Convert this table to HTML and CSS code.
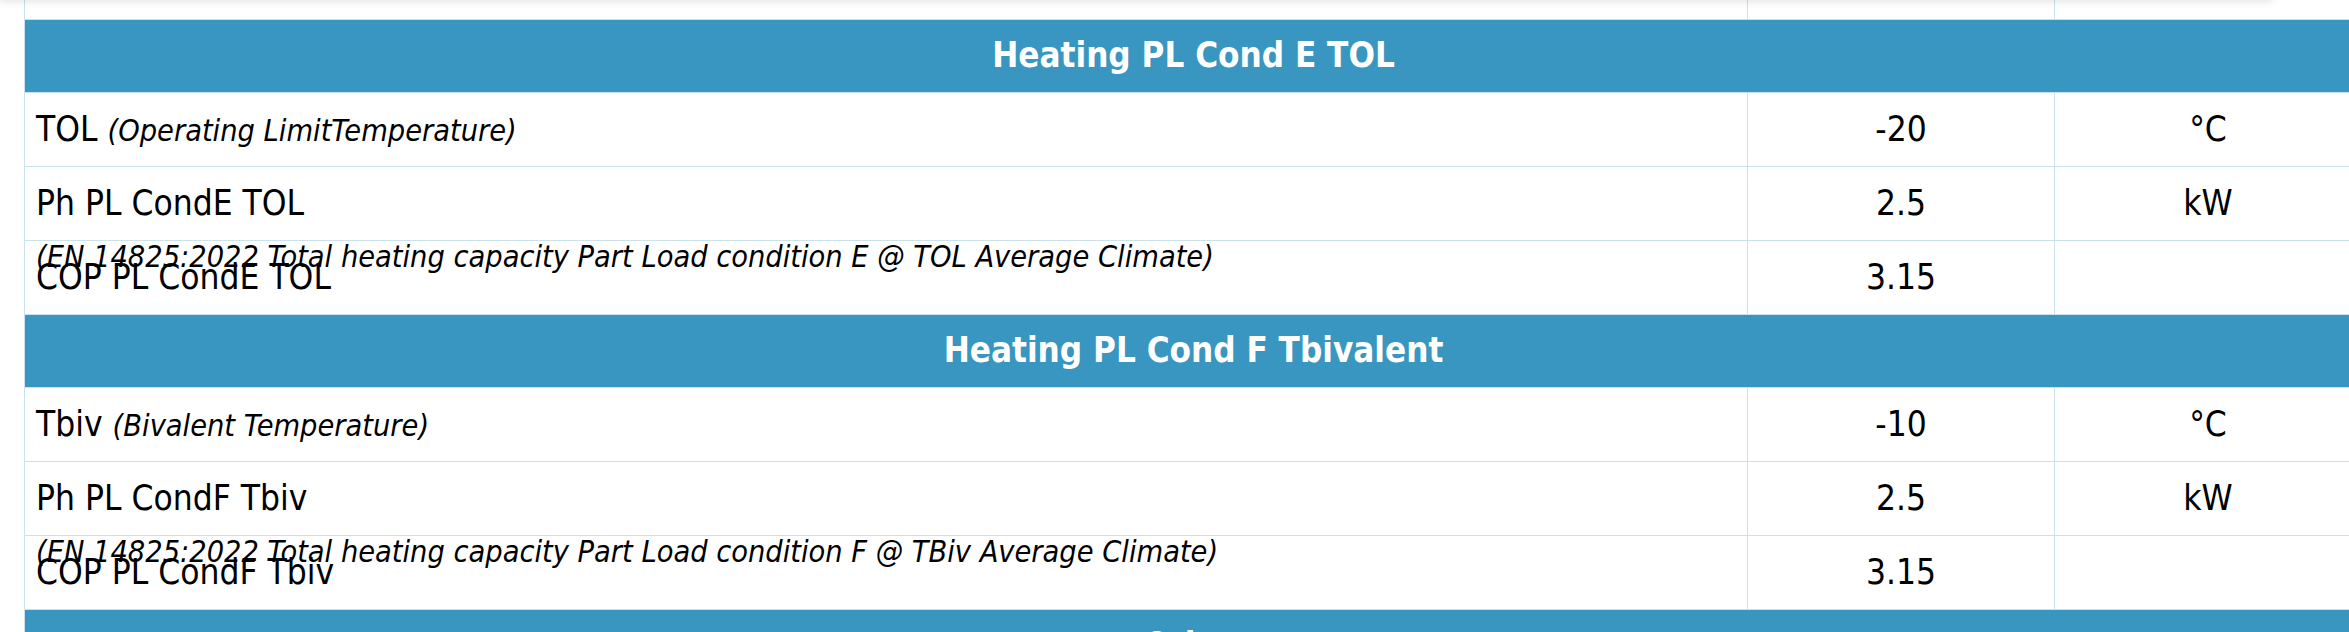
FILE: index.html
```html
<!DOCTYPE html>
<html lang="en">
<head>
<meta charset="utf-8">
<title>Heating PL conditions</title>
<link rel="stylesheet" href="styles.css">
</head>
<body>
<div class="topbar"></div>
<div class="spec">
  <div class="row row-top">
    <div class="cell label"></div>
    <div class="cell value"></div>
    <div class="cell unit"></div>
  </div>

  <div class="row section"><div class="cell title">Heating PL Cond E TOL</div></div>
  <div class="row">
    <div class="cell label">TOL <em>(Operating LimitTemperature)</em></div>
    <div class="cell value">-20</div>
    <div class="cell unit">°C</div>
  </div>
  <div class="row">
    <div class="cell label">Ph PL CondE TOL<br><em>(EN 14825:2022 Total heating capacity Part Load condition E @ TOL Average Climate)</em></div>
    <div class="cell value">2.5</div>
    <div class="cell unit">kW</div>
  </div>
  <div class="row">
    <div class="cell label">COP PL CondE TOL</div>
    <div class="cell value">3.15</div>
    <div class="cell unit"></div>
  </div>

  <div class="row section"><div class="cell title">Heating PL Cond F Tbivalent</div></div>
  <div class="row">
    <div class="cell label">Tbiv <em>(Bivalent Temperature)</em></div>
    <div class="cell value">-10</div>
    <div class="cell unit">°C</div>
  </div>
  <div class="row">
    <div class="cell label">Ph PL CondF Tbiv<br><em>(EN 14825:2022 Total heating capacity Part Load condition F @ TBiv Average Climate)</em></div>
    <div class="cell value">2.5</div>
    <div class="cell unit">kW</div>
  </div>
  <div class="row">
    <div class="cell label">COP PL CondF Tbiv</div>
    <div class="cell value">3.15</div>
    <div class="cell unit"></div>
  </div>

  <div class="row section"><div class="cell title">Other</div></div>
</div>
</body>
</html>
```

FILE: styles.css
```css
:root {
  --head: #3896c0;
  --line: #c9e2eb;
}

html {
  overflow: hidden;
}

body {
  margin: 0;
  background: #ffffff;
  color: #000000;
  font-family: "DejaVu Sans Condensed", "DejaVu Sans", "Liberation Sans", sans-serif;
  font-stretch: condensed;
  font-size: 35px;
  line-height: 52px;
}

.topbar {
  position: fixed;
  top: -30px;
  left: 0;
  width: 2273px;
  height: 30px;
  background: #ffffff;
  box-shadow: 0 0 9px rgba(0, 0, 0, 0.16);
  z-index: 2;
}

.spec {
  margin-left: 24px;
  width: 2337px;
  border-left: 1px solid var(--line);
}

.row {
  display: grid;
  grid-template-columns: 1722px 307px 307px;
  height: 74px;
  box-sizing: border-box;
  border-bottom: 1px solid var(--line);
}

.row-top {
  height: 20px;
}

.cell {
  padding: 10px 11px 0;
  white-space: nowrap;
}

.value,
.unit {
  border-left: 1px solid var(--line);
  text-align: center;
  padding-left: 0;
  padding-right: 0;
}

.label em {
  font-size: 30.4px;
}

.section {
  height: 73px;
  grid-template-columns: 1fr;
  background: var(--head);
}

.section .title {
  padding-top: 9px;
}

.title {
  color: #ffffff;
  font-weight: bold;
  font-size: 34.7px;
  text-align: center;
}
```
